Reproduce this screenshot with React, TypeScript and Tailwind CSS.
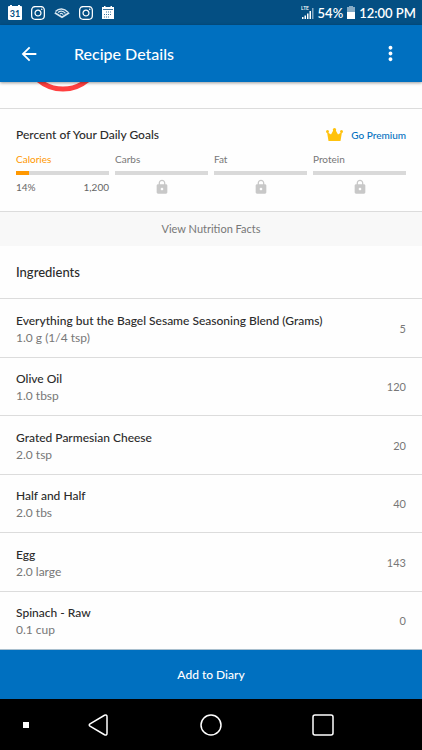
import { FaInstagram } from "react-icons/fa";
import { MdArrowBack, MdLock, MdMoreVert } from "react-icons/md";

interface Ingredient {
  name: string;
  amount: string;
  calories: number;
}

interface Goal {
  label: string;
  percent?: number;
  total?: string;
}

const INGREDIENTS: Ingredient[] = [
  { name: "Everything but the Bagel Sesame Seasoning Blend (Grams)", amount: "1.0 g (1/4 tsp)", calories: 5 },
  { name: "Olive Oil", amount: "1.0 tbsp", calories: 120 },
  { name: "Grated Parmesian Cheese", amount: "2.0 tsp", calories: 20 },
  { name: "Half and Half", amount: "2.0 tbs", calories: 40 },
  { name: "Egg", amount: "2.0 large", calories: 143 },
  { name: "Spinach - Raw", amount: "0.1 cup", calories: 0 },
];

// Goals without a percent are locked behind premium.
const GOALS: Goal[] = [
  { label: "Calories", percent: 14, total: "1,200" },
  { label: "Carbs" },
  { label: "Fat" },
  { label: "Protein" },
];

function DateIcon() {
  return (
    <svg width="14" height="15" viewBox="0 0 14 15" aria-hidden="true">
      <path d="M1 1h1V0h2v1h6V0h2v1h1q1 0 1 1v12q0 1-1 1H1q-1 0-1-1V2q0-1 1-1z" fill="#fff" />
      <text x="7" y="12" textAnchor="middle" fontSize="9" fontWeight="700" fill="#044f83" className="font-['Lato',sans-serif]">31</text>
    </svg>
  );
}

function AudibleIcon() {
  return (
    <svg width="16" height="12" viewBox="0 0 16 12" fill="none" stroke="#d8e6f0" aria-hidden="true">
      <path d="M.8 5.800L8 10.200l7.200-4.400" strokeWidth="1.800" />
      <path d="M1.500 4.600C5 1 10 1.200 14 5.200" strokeWidth="1.400" />
      <path d="M4 5.400C7 3.200 9.500 4 11.500 6.400" strokeWidth="1.300" />
      <path d="M6 6.900C7.200 6 8.300 6.400 9.200 7.700" strokeWidth="1.200" />
    </svg>
  );
}

function CalendarIcon() {
  return (
    <svg width="12" height="13" viewBox="0 0 12 13" aria-hidden="true">
      <path d="M0 1h2V0h1.500v1h5V0H10v1h2v12H0z" fill="#fff" />
      <g fill="#3d779f">
        <path d="M1 3h10v1H1z" />
        <path d="M4 5.500h1v1H4zM6 5.500h1v1H6zM8 5.500h1v1H8zM2 8h1v1H2zM4 8h1v1H4zM6 8h1v1H6zM8 8h1v1H8zM2 10.500h1v1H2zM4 10.500h1v1H4zM6 10.500h1v1H6z" />
      </g>
    </svg>
  );
}

function SignalIcon() {
  return (
    <svg width="13" height="14" viewBox="0 0 13 14" aria-hidden="true">
      <text x="0" y="4" fontSize="5" fill="#fff" className="font-['Lato',sans-serif]">LTE</text>
      <path d="M1 11h1.500v2H1zM3.500 9.500H5V13H3.500zM6 7.500h1.500V13H6zM8.500 5H10v8H8.500z" fill="#fff" />
      <path d="M11 2h1.500v11H11z" fill="#86abc5" />
    </svg>
  );
}

function BatteryIcon() {
  return (
    <svg width="8" height="13" viewBox="0 0 8 13" aria-hidden="true">
      <path d="M2 0h4v1h2v5H0V1h2z" fill="#86abc5" />
      <path d="M0 6h8v7H0z" fill="#fff" />
    </svg>
  );
}

function CrownIcon() {
  return (
    <svg width="17" height="14" viewBox="0 0 17 14" fill="#ffc20e" aria-hidden="true">
      <path d="M1 4l4 2.500L7.500 2h2L12 6.500 16 4l-1.500 9h-12z" />
      <circle cx="1.500" cy="3.500" r="1.500" />
      <circle cx="8.500" cy="1.800" r="1.700" />
      <circle cx="15.500" cy="3.500" r="1.500" />
    </svg>
  );
}

function GoalColumn({ label, percent, total }: Goal) {
  const unlocked = percent !== undefined;
  return (
    <li>
      <p className={unlocked ? "text-[#ff9800]" : "text-[#777]"}>{label}</p>
      <div className="mt-1 h-1 bg-[#d9d9d9]">
        {unlocked && <div className="h-full bg-[#ff9800]" style={{ width: `${percent}%` }} />}
      </div>
      {unlocked ? (
        <div className="mt-1 flex justify-between text-[#666]">
          <span>{percent}%</span>
          <span>{total}</span>
        </div>
      ) : (
        <MdLock className="mx-auto mt-1 size-4 text-[#c8c8c8]" aria-label="Locked" />
      )}
    </li>
  );
}

export default function App() {
  return (
    <div className="flex min-h-screen flex-col bg-[#fefefe] font-['Lato','Open_Sans',sans-serif] text-[#2b2b2b]">
      <div className="flex h-[25px] items-center justify-between bg-[#044f83] pr-1.5 pl-2 text-white">
        <div className="flex items-center gap-2">
          <DateIcon />
          <FaInstagram className="size-4" />
          <AudibleIcon />
          <FaInstagram className="size-4" />
          <CalendarIcon />
        </div>
        <div className="flex items-center gap-1 text-[13px] leading-5 font-semibold">
          <SignalIcon />
          <span>54%</span>
          <BatteryIcon />
          <span>12:00 PM</span>
        </div>
      </div>

      <header className="relative flex h-[57px] items-center bg-[#0070c0] pr-5 pl-[18px] text-white shadow-[0_1px_3px_rgba(0,0,0,0.4)]">
        <button type="button" aria-label="Back">
          <MdArrowBack className="size-[22px]" />
        </button>
        <h1 className="ml-[34px] flex-1 text-base leading-6 font-medium">Recipe Details</h1>
        <button type="button" aria-label="More options">
          <MdMoreVert className="size-[23px]" />
        </button>
      </header>

      <main className="flex flex-1 flex-col">
        <div className="h-[27px] border-b border-[#dcdcdc] pl-9">
          <svg width="54" height="12" viewBox="0 0 54 12" fill="none" aria-hidden="true">
            <circle cx="27" cy="-31" r="38" stroke="#ff4040" strokeWidth="5" />
          </svg>
        </div>

        <section className="border-b border-[#dcdcdc] px-4 pt-4 pb-4">
          <div className="flex h-5 items-center justify-between">
            <h2 className="text-xs leading-5 font-medium">Percent of Your Daily Goals</h2>
            <a href="#premium" className="flex items-center gap-2 text-[10px] leading-4 font-medium text-[#0070c0]">
              <CrownIcon />
              Go Premium
            </a>
          </div>
          <ul className="mt-1.5 grid grid-cols-4 gap-1.5 text-[10px] leading-4">
            {GOALS.map((goal) => (
              <GoalColumn key={goal.label} {...goal} />
            ))}
          </ul>
        </section>

        <button type="button" className="h-[34px] bg-[#f8f8f8] text-[11px] leading-4 text-[#777]">
          View Nutrition Facts
        </button>

        <section className="flex flex-1 flex-col">
          <h2 className="px-4 py-4 text-[13px] leading-5 font-medium">Ingredients</h2>
          <ul className="flex flex-1 flex-col">
            {INGREDIENTS.map((item) => (
              <li key={item.name} className="flex flex-1 items-center justify-between border-t border-[#dcdcdc] px-4 pt-0.5">
                <div>
                  <p className="text-xs leading-[17px] font-medium">{item.name}</p>
                  <p className="text-xs leading-[17px] text-[#777]">{item.amount}</p>
                </div>
                <span className="text-[11px] leading-4 text-[#777]">{item.calories}</span>
              </li>
            ))}
          </ul>
        </section>
      </main>

      <button type="button" className="h-[50px] border-t border-[#a9bfce] bg-[#0070c0] text-xs leading-4 font-medium text-white">
        Add to Diary
      </button>

      <nav className="flex h-[51px] items-center bg-black pl-[23px] text-white">
        <span className="size-1.5 bg-white" />
        <button type="button" aria-label="Back" className="ml-[59px]">
          <svg width="21" height="22" viewBox="0 0 21 22" fill="none" stroke="currentColor" strokeWidth="1.500">
            <path d="M2 9.800L16.500 1.300Q19 .3 19 2.800v16.400q0 2.500-2.500 1.500L2 12.200Q.5 11 2 9.800z" />
          </svg>
        </button>
        <button type="button" aria-label="Home" className="ml-[91px]">
          <svg width="22" height="22" viewBox="0 0 22 22" fill="none" stroke="currentColor" strokeWidth="1.500">
            <circle cx="11" cy="11" r="10" />
          </svg>
        </button>
        <button type="button" aria-label="Recent apps" className="ml-[90px]">
          <svg width="22" height="22" viewBox="0 0 22 22" fill="none" stroke="currentColor" strokeWidth="1.500">
            <rect x="1" y="1" width="20" height="20" rx="2" />
          </svg>
        </button>
      </nav>
    </div>
  );
}
